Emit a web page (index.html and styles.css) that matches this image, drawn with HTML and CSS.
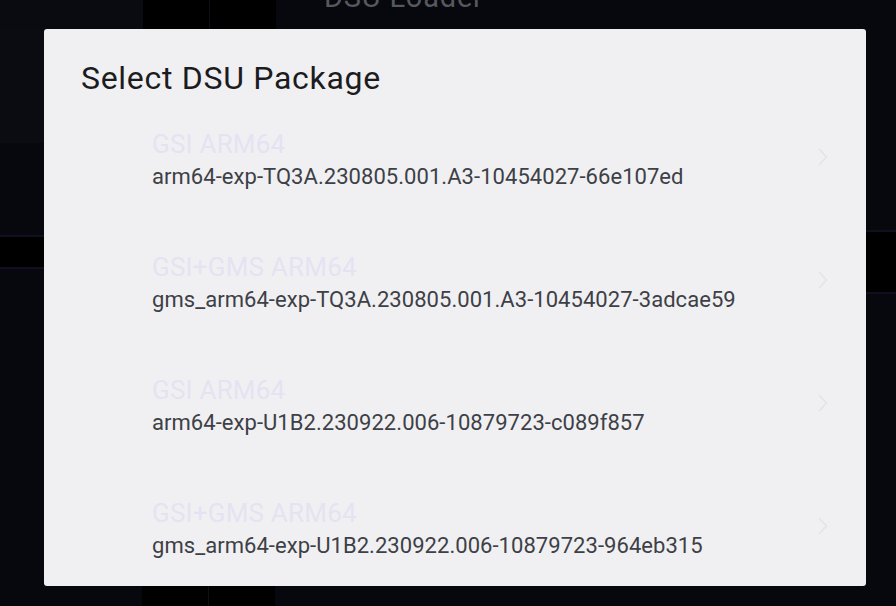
FILE: index.html
```html
<!DOCTYPE html>
<html lang="en">
<head>
    <meta charset="UTF-8">
    <meta name="viewport" content="width=device-width, initial-scale=1.0">
    <title>DSU Loader</title>
    <link rel="stylesheet" href="styles.css">
</head>
<body>
    <div class="screen">
        <div class="bar bar-top">
            <div class="bar-pad"></div>
            <div class="tile"></div>
            <div class="tile-sep"></div>
            <div class="tile"></div>
            <div class="app-title">DSU Loader</div>
        </div>

        <div class="middle">
            <div class="side side-left"><div class="band"></div></div>

            <div class="dialog">
                <h2 class="dialog-title">Select DSU Package</h2>
                <ul class="package-list">
                    <li class="package">
                        <div class="package-text">
                            <div class="package-name">GSI ARM64</div>
                            <div class="package-build">arm64-exp-TQ3A.230805.001.A3-10454027-66e107ed</div>
                        </div>
                        <svg class="chevron" width="10" height="18" viewBox="0 0 10 18"><polyline points="1.5,1.5 8.5,9 1.5,16.5" /></svg>
                    </li>
                    <li class="package">
                        <div class="package-text">
                            <div class="package-name">GSI+GMS ARM64</div>
                            <div class="package-build">gms_arm64-exp-TQ3A.230805.001.A3-10454027-3adcae59</div>
                        </div>
                        <svg class="chevron" width="10" height="18" viewBox="0 0 10 18"><polyline points="1.5,1.5 8.5,9 1.5,16.5" /></svg>
                    </li>
                    <li class="package">
                        <div class="package-text">
                            <div class="package-name">GSI ARM64</div>
                            <div class="package-build">arm64-exp-U1B2.230922.006-10879723-c089f857</div>
                        </div>
                        <svg class="chevron" width="10" height="18" viewBox="0 0 10 18"><polyline points="1.5,1.5 8.5,9 1.5,16.5" /></svg>
                    </li>
                    <li class="package">
                        <div class="package-text">
                            <div class="package-name">GSI+GMS ARM64</div>
                            <div class="package-build">gms_arm64-exp-U1B2.230922.006-10879723-964eb315</div>
                        </div>
                        <svg class="chevron" width="10" height="18" viewBox="0 0 10 18"><polyline points="1.5,1.5 8.5,9 1.5,16.5" /></svg>
                    </li>
                </ul>
            </div>

            <div class="side side-right"><div class="band"></div></div>
        </div>

        <div class="bar bar-bottom">
            <div class="bar-pad"></div>
            <div class="tile"></div>
            <div class="tile-sep"></div>
            <div class="tile"></div>
        </div>
    </div>
</body>
</html>
```

FILE: styles.css
```css
body {
    margin: 0;
    background-color: #07080d;
    font-family: Roboto, "Noto Sans", sans-serif;
}

.screen {
    width: 896px;
    height: 606px;
    display: flex;
    flex-direction: column;
    overflow: hidden;
}

/* underlying app, dimmed */
.bar {
    display: flex;
    flex-shrink: 0;
}

.bar-top {
    height: 29px;
}

.bar-bottom {
    height: 20px;
}

.bar-pad {
    width: 143px;
    background-color: #0a0b10;
}

.bar-bottom .bar-pad {
    width: 142px;
    background-color: #07080d;
}

.tile {
    width: 66px;
    background-color: #000;
}

.tile-sep {
    width: 1px;
    background-color: #0e0f16;
}

.app-title {
    margin-left: 48px;
    margin-top: -20px;
    font-size: 29px;
    line-height: 34px;
    letter-spacing: 0.8px;
    color: #55585f;
    white-space: nowrap;
}

.middle {
    flex: 1;
    display: flex;
    min-height: 0;
}

.side {
    flex-shrink: 0;
    display: flex;
    flex-direction: column;
}

.side-left {
    width: 44px;
    background: linear-gradient(#0b0c12 0 114px, #07080d 114px);
}

.side-right {
    width: 30px;
}

.band {
    background-color: #000;
    border-top: 2px solid #110f1f;
    border-bottom: 2px solid #110f1f;
}

.side-left .band {
    margin-top: 206px;
    height: 30px;
}

.side-right .band {
    margin-top: 201px;
    height: 60px;
}

/* dialog */
.dialog {
    flex: 1;
    background-color: #f0f0f2;
    border-radius: 3px;
    overflow: hidden;
    padding-top: 31px;
}

.dialog-title {
    margin: 0 0 0 37px;
    font-size: 32px;
    line-height: 36px;
    font-weight: 400;
    letter-spacing: 0.7px;
    color: #1c1c1f;
}

.package-list {
    list-style: none;
    margin: 2px 0 0;
    padding: 0;
}

.package {
    height: 123px;
    display: flex;
    align-items: center;
    padding-left: 108px;
    padding-right: 38px;
}

.package-text {
    flex: 1;
}

.package-name {
    font-size: 26px;
    line-height: 30px;
    letter-spacing: 0.2px;
    color: #e5e3f2;
}

.package-build {
    margin-top: 4px;
    font-size: 22px;
    line-height: 28px;
    letter-spacing: 0.05px;
    color: #3d4046;
    white-space: nowrap;
}

.chevron {
    margin-top: -6px;
}

.chevron polyline {
    fill: none;
    stroke: #e4e3ec;
    stroke-width: 1.6;
    stroke-linecap: round;
    stroke-linejoin: round;
}
```
